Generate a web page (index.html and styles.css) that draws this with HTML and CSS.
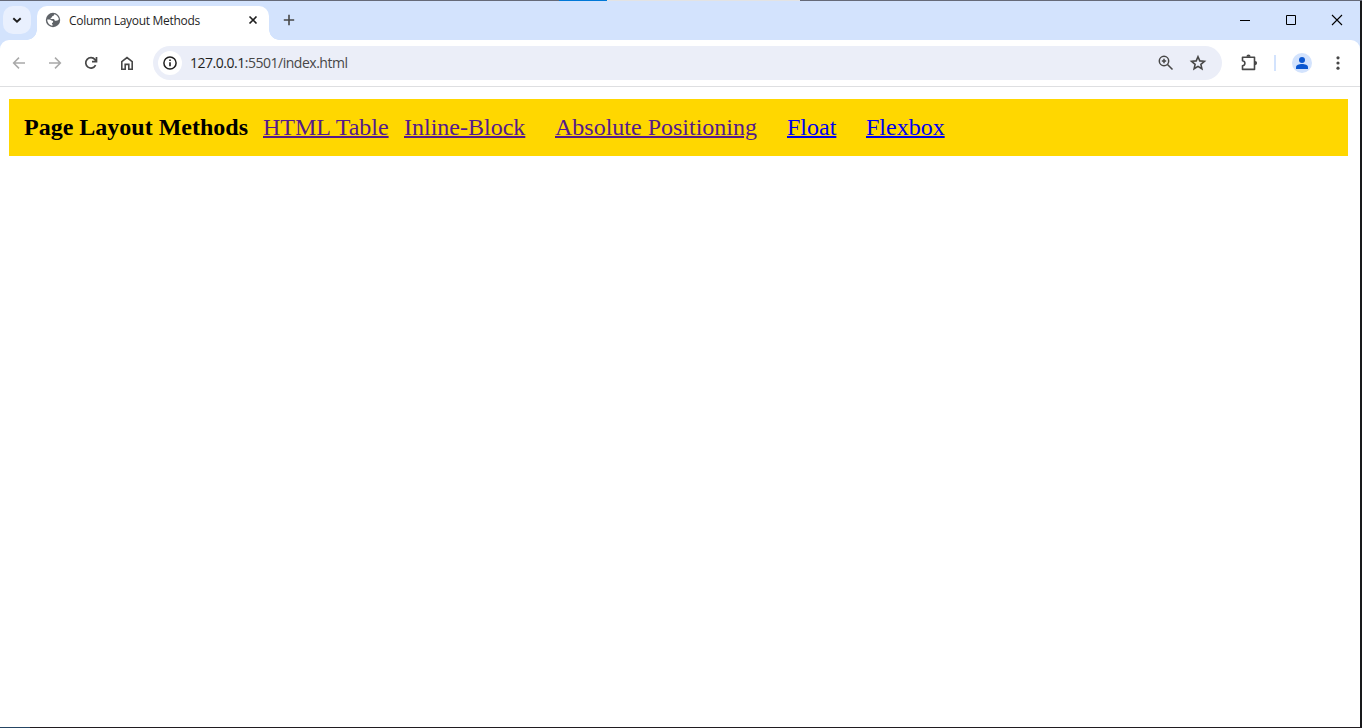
FILE: index.html
```html
<!DOCTYPE html>
<html lang="en">
<head>
<meta charset="utf-8">
<title>Column Layout Methods</title>
<link rel="stylesheet" href="styles.css">
</head>
<body>
<div class="top-edge"><span class="edge-blue"></span><span class="edge-light"></span></div>
<div class="window">
  <header class="tabstrip">
    <button class="tab-search"><svg width="28" height="28" viewBox="0 0 28 28"><path d="M10.3 12.3l3.7 3.5 3.7-3.5" fill="none" stroke="#1f1f1f" stroke-width="1.9"/></svg></button>
    <div class="tab">
      <svg class="globe" width="16" height="16" viewBox="0 0 16 16"><circle cx="8" cy="8" r="7.2" fill="#5f6368"/><path d="M9 2.2c.3 1.2-.3 1.6-1.2 1.8-.8.2-.7 1.5-1.6 1.7-.8.2-.8 1-.2 1.2h2.6c1 0 .7 1.6 1.5 1.8 1.1.2 2.3-.1 3.4-.7l.3-1.3C13.200 4.400 11.400 2.700 9 2.200zM2.200 7.600C2.300 11 4.400 13.400 7.500 13.800v-1.600c-.8-.3-.8-1.200.1-1.500.9-.4.7-1.700-.2-1.900C5.900 8.600 6 7.600 4.700 7.600z" fill="#fff"/></svg>
      <span class="tab-title">Column Layout Methods</span>
      <svg class="tab-close" width="10" height="10" viewBox="0 0 10 10"><path d="M1.500 1.500l7 7M8.500 1.500l-7 7" stroke="#1f1f1f" stroke-width="1.600"/></svg>
    </div>
    <svg class="new-tab" width="12" height="12" viewBox="0 0 12 12"><path d="M6 .8v10.4M.8 6h10.4" stroke="#474747" stroke-width="1.6"/></svg>
    <div class="controls">
      <svg width="46" height="38" viewBox="0 0 46 38"><path d="M18 19.500h10" stroke="#000"/></svg>
      <svg width="46" height="38" viewBox="0 0 46 38"><path d="M18.500 14.500h9v9h-9z" fill="none" stroke="#000"/></svg>
      <svg width="46" height="38" viewBox="0 0 46 38"><path d="M18 14l10 10M28 14L18 24" stroke="#000" stroke-width="1.1"/></svg>
    </div>
  </header>
  <div class="toolbar">
    <nav class="nav-icons">
      <svg width="36" height="36" viewBox="0 0 36 36"><path d="M24 18H12.700M18 12.600L12.600 18l5.400 5.400" fill="none" stroke="#a9a9a9" stroke-width="1.500"/></svg>
      <svg width="36" height="36" viewBox="0 0 36 36"><path d="M12 18h11.300M18 12.600l5.400 5.400-5.400 5.400" fill="none" stroke="#a9a9a9" stroke-width="1.500"/></svg>
      <svg width="36" height="36" viewBox="0 0 36 36"><path d="M22.6 20.2A5.2 5.2 0 1 1 22 14.6L23.2 16M23.5 12v4.6H19" fill="none" stroke="#474747" stroke-width="1.7"/></svg>
      <svg width="36" height="36" viewBox="0 0 36 36"><path d="M12.800 24.200v-7.600L18 12.600l5.200 4v7.600h-3.400v-4.800h-3.600v4.800z" fill="none" stroke="#474747" stroke-width="1.6"/></svg>
    </nav>
    <div class="address">
      <span class="site-info"><svg width="24" height="24" viewBox="0 0 24 24"><circle cx="12" cy="12" r="6.1" fill="none" stroke="#1f1f1f" stroke-width="1.5"/><path d="M12 11.2v4M12 8.4v1.6" stroke="#1f1f1f" stroke-width="1.6"/></svg></span>
      <span class="url"><span class="host">127.0.0.1</span>:5501/index.html</span>
      <svg class="magnifier" width="16" height="16" viewBox="0 0 16 16"><circle cx="6" cy="6" r="4.7" fill="none" stroke="#474747" stroke-width="1.5"/><path d="M9.5 9.5l5 5M3.8 6h4.4M6 3.8v4.4" fill="none" stroke="#474747" stroke-width="1.5"/></svg>
      <svg class="star" width="18" height="18" viewBox="0 0 18 18"><path d="M9 2.7l1.8 4.2 4.6.4-3.5 3 1 4.5L9 12.4l-3.9 2.4 1-4.5-3.5-3 4.6-.4z" fill="none" stroke="#474747" stroke-width="1.6"/></svg>
    </div>
    <svg class="puzzle" width="20" height="20" viewBox="0 0 20 20"><path d="M3.500 4.200h12v12.200h-12v-3.600c3.200-.5 3.200-4.600 0-5.100z" fill="none" stroke="#474747" stroke-width="1.6" stroke-linejoin="round"/><path d="M7.400 3.700a2.100 2.100 0 0 1 4.200 0zM16 8a2.100 2.100 0 0 1 0 4.200z" fill="#474747"/></svg>
    <span class="divider"></span>
    <span class="avatar"><svg width="20" height="20" viewBox="0 0 20 20"><circle cx="10" cy="7" r="3" fill="#0b57d0"/><path d="M4 16v-1.8c0-2 3-3.1 6-3.1s6 1.1 6 3.1V16z" fill="#0b57d0"/></svg></span>
    <svg class="more" width="4" height="16" viewBox="0 0 4 16"><g fill="#474747"><circle cx="2" cy="2.8" r="1.6"/><circle cx="2" cy="8" r="1.6"/><circle cx="2" cy="13.2" r="1.6"/></g></svg>
  </div>
  <main class="page">
    <div class="menu">
      <strong class="menu-title">Page Layout Methods</strong>
      <a class="visited table-link" href="#">HTML Table</a>
      <a class="visited inline-link" href="#">Inline-Block</a>
      <a class="visited position-link" href="#">Absolute Positioning</a>
      <a class="float-link" href="#">Float</a>
      <a class="flex-link" href="#">Flexbox</a>
    </div>
  </main>
</div>
<div class="bottom-edge"><span class="bottom-blue"></span></div>
</body>
</html>
```
FILE: styles.css
```css
* { box-sizing: border-box; }
body { margin: 0; width: 1362px; height: 728px; overflow: hidden; background: #18191b; display: flex; flex-direction: column; }
svg { display: block; flex: none; }
.top-edge { height: 1px; background: #666a78; display: flex; padding-left: 559px; }
.edge-blue { width: 48px; background: #0078d7; }
.edge-light { width: 193px; background: #e3e3e3; }
.window { width: 1360px; height: 726px; background: #d3e3fd; display: flex; flex-direction: column; }
.tabstrip { height: 39px; display: flex; align-items: flex-start; }
.tab-search { margin: 5px 0 0 3px; width: 28px; height: 28px; padding: 0; border: 0; border-radius: 10px; background: #e9f0fe; }
.tab { position: relative; margin: 5px 0 0 6px; width: 232px; height: 34px; background: #fff; border-radius: 10px 10px 0 0; display: flex; align-items: center; padding: 0 11px 6px 8px; }
.tab::before, .tab::after { content: ""; position: absolute; bottom: 0; width: 10px; height: 10px; }
.tab::before { left: -10px; background: radial-gradient(circle at 0 0, transparent 9.5px, #fff 10px); }
.tab::after { right: -10px; background: radial-gradient(circle at 100% 0, transparent 9.5px, #fff 10px); }
.tab-title { margin: 2px 0 0 8px; font: 12px/16px "Open Sans", sans-serif; letter-spacing: -0.29px; color: #1f1f1f; white-space: nowrap; }
.tab-close { margin-left: auto; }
.new-tab { margin: 13px 0 0 14px; }
.controls { display: flex; margin-left: auto; }
.toolbar { height: 47px; background: #fff; border-bottom: 1px solid #dedfe1; border-radius: 9px 9px 0 0; display: flex; align-items: center; }
.nav-icons { display: flex; padding-left: 1px; }
.address { margin-left: 8px; width: 1069px; height: 34px; border-radius: 17px; background: #ebeef8; display: flex; align-items: center; padding: 0 15px 0 5px; }
.site-info { width: 24px; height: 24px; border-radius: 50%; background: #fff; }
.url { margin-left: 8px; font: 14px/20px "Open Sans", sans-serif; letter-spacing: -0.48px; color: #474747; white-space: nowrap; }
.host { color: #1f1f1f; }
.magnifier { margin-left: auto; }
.star { margin-left: 15px; }
.puzzle { margin-left: 17px; }
.divider { width: 2px; height: 16px; margin-left: 15px; background: #d3e3fd; }
.avatar { width: 20px; height: 20px; margin-left: 16px; border-radius: 50%; background: #d3e3fd; }
.more { margin-left: 24px; }
.page { flex: 1; background: #fff; padding: 12px 12px 0 9px; }
.menu { height: 57px; background: gold; padding: 15px; display: flex; align-items: flex-start; font: 24px/27px "Liberation Serif", "Times New Roman", serif; white-space: nowrap; }
.menu a { color: #00e; text-decoration-thickness: 2px; }
.menu a.visited { color: #551a8b; }
.menu-title { width: 224px; margin-right: 15px; color: #000; }
.table-link { width: 126px; margin-right: 15px; }
.inline-link { width: 121px; margin-right: 30px; }
.position-link { width: 202px; margin-right: 30px; }
.float-link { width: 49px; margin-right: 30px; }
.flex-link { width: 79px; }
.bottom-edge { height: 1px; background: #201c20; display: flex; }
.bottom-blue { width: 30px; background: #254563; }
```
